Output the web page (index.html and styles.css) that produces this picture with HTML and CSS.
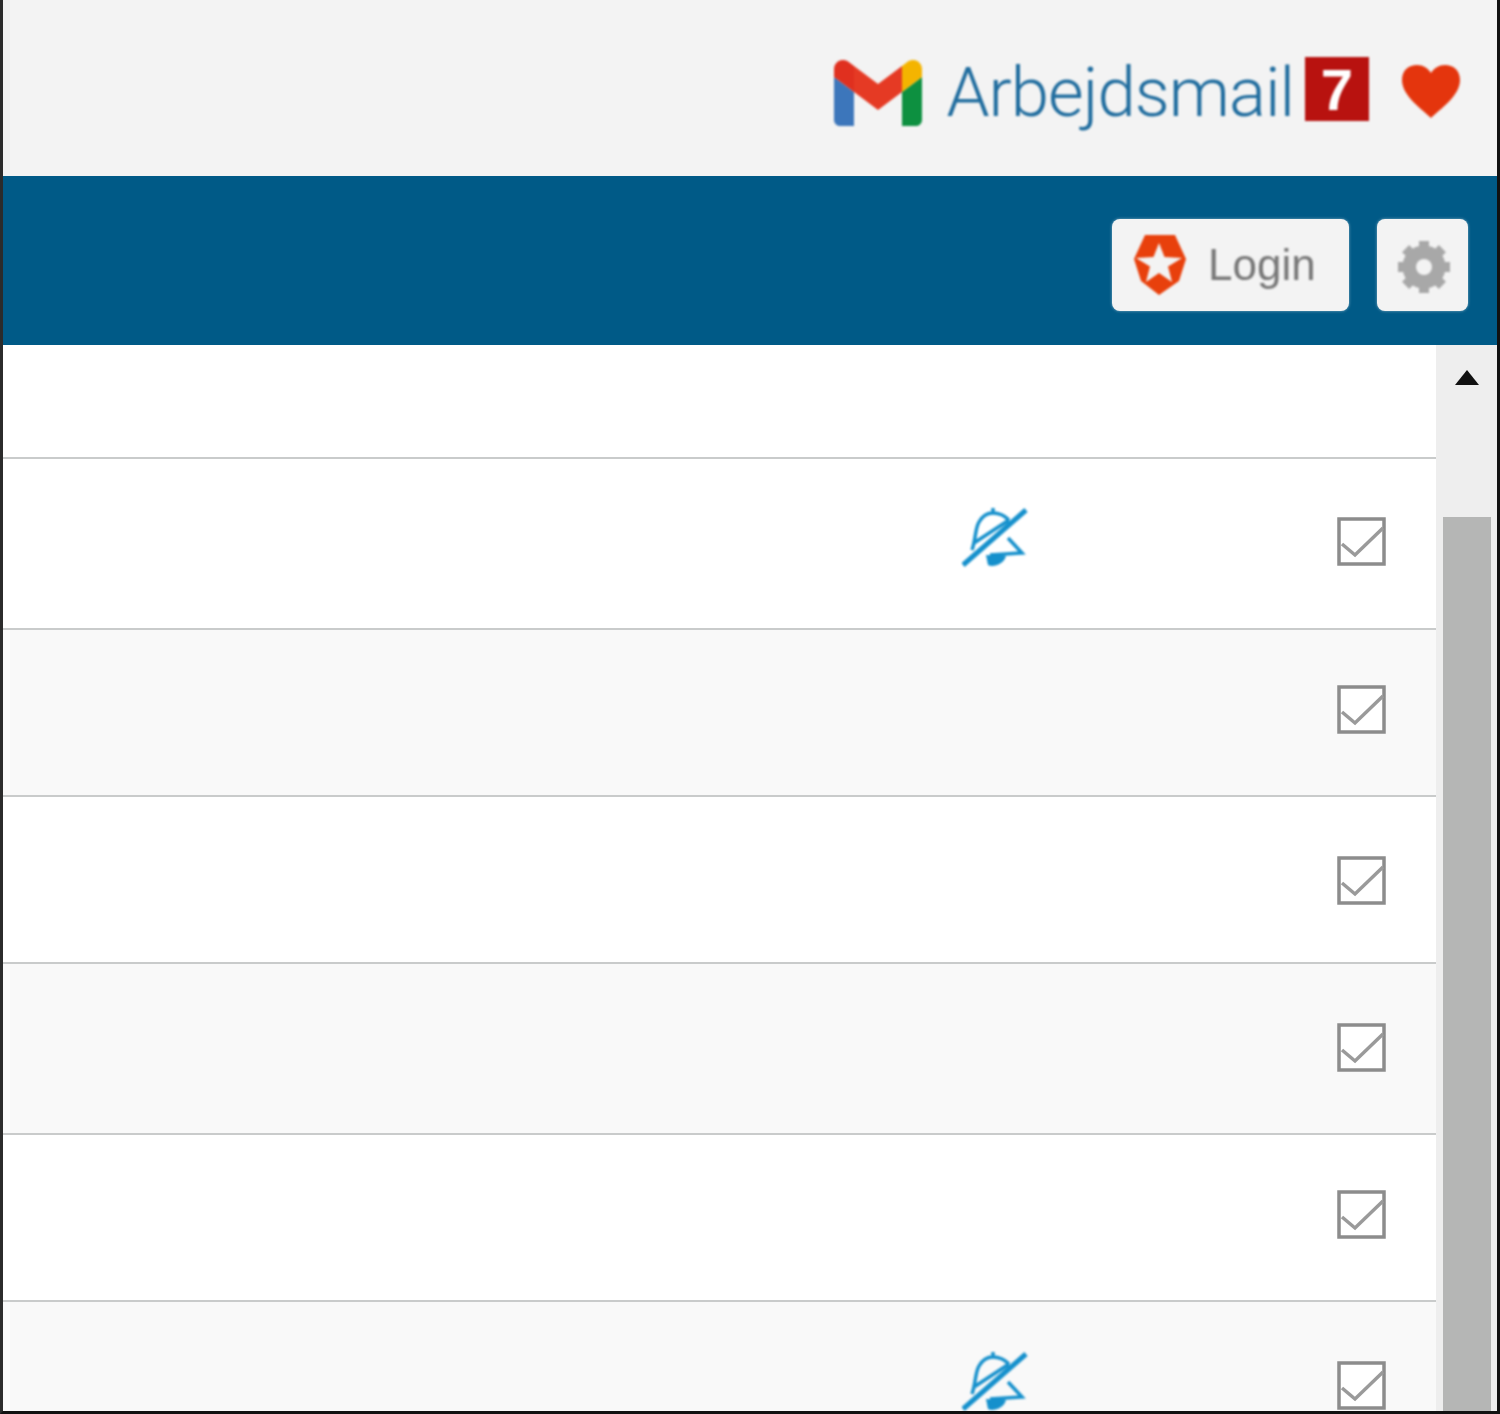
FILE: index.html
```html
<!DOCTYPE html>
<html lang="en">
<head>
    <meta charset="UTF-8">
    <meta name="viewport" content="width=device-width, initial-scale=1.0">
    <title>Arbejdsmail</title>
    <link rel="stylesheet" href="styles.css">
</head>
<body>
    <div class="app">
        <header class="top-bar">
            <a class="mail-link" href="#">
                <svg class="gmail-logo" viewBox="52 42 88 66">
                    <path fill="#3c76bb" d="M58 108h14V74L52 59v43c0 3.32 2.69 6 6 6"/>
                    <path fill="#0d9040" d="M120 108h14c3.32 0 6-2.69 6-6V59l-20 15"/>
                    <path fill="#f4b400" d="M120 48v26l20-15v-8c0-7.42-8.47-11.65-14.4-7.2"/>
                    <path fill="#e53a24" d="M72 74V48l24 18 24-18v26L96 92"/>
                    <path fill="#e0301f" d="M52 51v8l20 15V48l-5.6-4.2c-5.94-4.45-14.4-.22-14.4 7.2"/>
                </svg>
                <span class="mail-label">Arbejdsmail</span>
                <span class="badge">7</span>
            </a>
            <svg class="heart" viewBox="0 0 58 53">
                <path d="M29 53 C20 44 0 31 0 15 C0 5 7 0 15 0 C21 0 26 3 29 8 C32 3 37 0 43 0 C51 0 58 5 58 15 C58 31 38 44 29 53Z"/>
            </svg>
        </header>

        <nav class="nav-bar">
            <button class="nav-button login-button">
                <svg class="auth-logo" viewBox="0 0 52 60">
                    <path fill-rule="evenodd" d="M11 0H41L52 24L45 46L25 60L7 46L0 24Z M25 8L30.5 22L48 23L34 31.5L38 47L25 38L12 47L16 31.5L2 23L19.5 22Z"/>
                </svg>
                <span>Login</span>
            </button>
            <button class="nav-button gear-button">
                <svg class="gear" viewBox="0 0 52 52">
                    <circle cx="26" cy="26" r="15" fill="none" stroke="#a8a8a8" stroke-width="13"/>
                    <g stroke="#a8a8a8" stroke-width="10">
                        <path d="M26 0V52"/>
                        <path d="M0 26H52"/>
                        <path d="M7.6 7.6L44.4 44.4"/>
                        <path d="M44.4 7.6L7.6 44.4"/>
                    </g>
                    <circle cx="26" cy="26" r="8" fill="#f3f3f3"/>
                </svg>
            </button>
        </nav>

        <main class="content">
            <div class="list">
                <div class="row row-first"></div>

                <div class="row row-tall">
                    <svg class="bell" viewBox="0 0 66 63">
                        <path d="M10 45C14 33 13 24 17 17C21 10 26 8 31 8C37 8 43 11 47 15M31 8V3M12 38L47 15M46 33L60 48L28 50"/>
                        <path class="clapper" d="M24 50L44 51C42 59 31 63 26 60Z"/>
                        <path class="slash" d="M1 60L64 5"/>
                    </svg>
                    <svg class="check" viewBox="0 0 49 49"><rect x="2" y="2" width="45" height="45"/><path d="M5 27L18 38L46 11"/></svg>
                </div>

                <div class="row row-short row-alt">
                    <span></span>
                    <svg class="check" viewBox="0 0 49 49"><rect x="2" y="2" width="45" height="45"/><path d="M5 27L18 38L46 11"/></svg>
                </div>

                <div class="row row-plain">
                    <span></span>
                    <svg class="check" viewBox="0 0 49 49"><rect x="2" y="2" width="45" height="45"/><path d="M5 27L18 38L46 11"/></svg>
                </div>

                <div class="row row-tall row-alt">
                    <span></span>
                    <svg class="check" viewBox="0 0 49 49"><rect x="2" y="2" width="45" height="45"/><path d="M5 27L18 38L46 11"/></svg>
                </div>

                <div class="row row-short">
                    <span></span>
                    <svg class="check" viewBox="0 0 49 49"><rect x="2" y="2" width="45" height="45"/><path d="M5 27L18 38L46 11"/></svg>
                </div>

                <div class="row row-last row-alt">
                    <svg class="bell" viewBox="0 0 66 63">
                        <path d="M10 45C14 33 13 24 17 17C21 10 26 8 31 8C37 8 43 11 47 15M31 8V3M12 38L47 15M46 33L60 48L28 50"/>
                        <path class="clapper" d="M24 50L44 51C42 59 31 63 26 60Z"/>
                        <path class="slash" d="M1 60L64 5"/>
                    </svg>
                    <svg class="check" viewBox="0 0 49 49"><rect x="2" y="2" width="45" height="45"/><path d="M5 27L18 38L46 11"/></svg>
                </div>
            </div>

            <div class="scrollbar">
                <div class="scroll-up"><span class="arrow-up"></span></div>
                <div class="scroll-thumb"></div>
            </div>
        </main>
    </div>
</body>
</html>
```

FILE: styles.css
```css
* {
    margin: 0;
    padding: 0;
    box-sizing: border-box;
}

html, body {
    height: 100%;
    overflow: hidden;
    background-color: #111;
}

.app {
    display: flex;
    flex-direction: column;
    height: 1414px;
    border-left: 3px solid #2b2b2b;
    border-right: 3px solid #111;
    border-bottom: 3px solid #111;
    background-color: #fff;
    font-family: "Liberation Sans", Arial, sans-serif;
    overflow: hidden;
}

/* top bar */
.top-bar {
    display: flex;
    justify-content: flex-end;
    align-items: flex-start;
    height: 176px;
    padding-right: 37px;
    background-color: #f3f3f3;
    flex-shrink: 0;
}

.mail-link {
    display: flex;
    align-items: flex-start;
    color: #1f6c9e;
    text-decoration: none;
}

.gmail-logo {
    width: 90px;
    height: 66px;
    margin: 60px 25px 0 2px;
    filter: blur(1px);
}

.mail-label {
    font-family: Roboto, "Liberation Sans", sans-serif;
    font-weight: 300;
    font-size: 69px;
    letter-spacing: -1px;
    line-height: 1;
    margin: 58px 11px 0 -2px;
    filter: blur(1px);
}

.badge {
    display: flex;
    justify-content: center;
    align-items: center;
    width: 64px;
    height: 64px;
    margin: 57px 33px 0 0;
    background-color: #b8120f;
    color: #fff;
    font-weight: bold;
    font-size: 58px;
    filter: blur(0.8px);
}

.heart {
    width: 58px;
    height: 53px;
    margin-top: 65px;
    fill: #e4350d;
    filter: blur(0.8px);
}

/* blue bar */
.nav-bar {
    display: flex;
    justify-content: flex-end;
    align-items: flex-start;
    gap: 28px;
    height: 169px;
    padding: 43px 29px 0 0;
    background-color: #005a87;
    flex-shrink: 0;
}

.nav-button {
    display: flex;
    align-items: center;
    height: 92px;
    border: none;
    border-radius: 8px;
    background-color: #f3f3f3;
    box-shadow: 0 0 3px rgba(255, 255, 255, 0.5);
}

.login-button {
    width: 237px;
    padding-left: 22px;
    color: #777;
    font-family: "Liberation Sans", Arial, sans-serif;
    font-size: 44px;
}

.login-button span {
    margin-left: 22px;
    filter: blur(1px);
}

.auth-logo {
    width: 52px;
    height: 60px;
    fill: #e8400c;
    filter: blur(0.8px);
}

.gear-button {
    justify-content: center;
    width: 91px;
}

.gear {
    width: 52px;
    height: 52px;
    margin: 3px 0 0 3px;
    filter: blur(1px);
}

/* list */
.content {
    display: flex;
    flex: 1;
    min-height: 0;
}

.list {
    flex: 1;
    min-width: 0;
}

.row {
    display: grid;
    grid-template-columns: 66px 49px;
    column-gap: 309px;
    justify-content: end;
    align-items: start;
    padding-right: 50px;
    border-bottom: 2px solid #c9cbcb;
    background-color: #fff;
}

.row-alt {
    background-color: #f9f9f9;
}

.row-first {
    height: 114px;
}

.row-tall {
    height: 171px;
    padding-top: 58px;
}

.row-alt.row-tall {
    padding-top: 59px;
}

.row-short {
    height: 167px;
    padding-top: 55px;
}

.row-plain {
    height: 167px;
    padding-top: 59px;
}

.row-last {
    height: 120px;
    padding-top: 59px;
    border-bottom: none;
}

.check {
    width: 49px;
    height: 49px;
    fill: #fff;
    stroke: #8c8c8c;
    stroke-width: 3.5;
    filter: blur(0.7px);
}

.check path {
    fill: none;
    stroke: #9a9a9a;
    stroke-width: 3.5;
}

.bell {
    width: 66px;
    height: 63px;
    margin-top: -12px;
    fill: none;
    stroke: #1590cc;
    stroke-width: 3.5;
    filter: blur(0.8px);
}

.bell .slash {
    stroke-width: 5;
}

.bell .clapper {
    fill: #1590cc;
    stroke: none;
}

/* scrollbar */
.scrollbar {
    display: flex;
    flex-direction: column;
    align-items: center;
    width: 61px;
    padding-left: 1px;
    background-color: #eeeeee;
    flex-shrink: 0;
}

.scroll-up {
    display: flex;
    justify-content: center;
    height: 172px;
    padding-top: 25px;
}

.arrow-up {
    width: 0;
    height: 0;
    border-left: 12px solid transparent;
    border-right: 12px solid transparent;
    border-bottom: 15px solid #111;
    filter: blur(0.5px);
}

.scroll-thumb {
    flex: 1;
    width: 48px;
    background-color: #b5b6b5;
}
```
